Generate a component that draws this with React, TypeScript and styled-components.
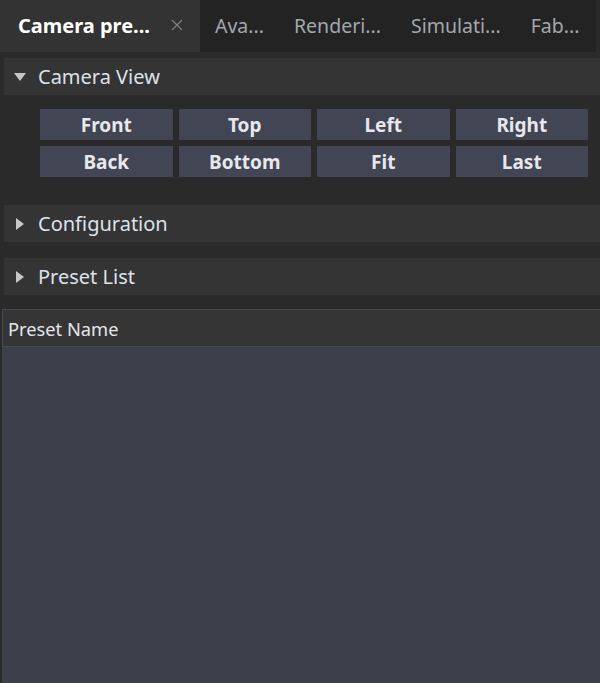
import React from "react";
import styled, { createGlobalStyle } from "styled-components";

const Global = createGlobalStyle`
  html, body { margin: 0; padding: 0; background: #2a2a2a; }
  body { font-family: "Noto Sans", "Open Sans", sans-serif; }
  * { box-sizing: border-box; }
`;

const Page = styled.div`
  width: 600px;
  height: 683px;
  background: #2a2a2a;
  display: flex;
  flex-direction: column;
  overflow: hidden;
`;

const TabBar = styled.div`
  height: 52px;
  margin-right: 4px;
  background: #232323;
  display: flex;
  align-items: stretch;
  flex-shrink: 0;
`;

const Tab = styled.div<{ $active?: boolean }>`
  display: flex;
  align-items: center;
  padding: ${(p) => (p.$active ? "0 17px 2px 18px" : "0 15px 2px")};
  width: ${(p) => (p.$active ? "200px" : "auto")};
  background: ${(p) => (p.$active ? "#333333" : "transparent")};
  color: ${(p) => (p.$active ? "#ffffff" : "#a3a7ae")};
  font-size: ${(p) => (p.$active ? "20px" : "19.5px")};
  font-weight: ${(p) => (p.$active ? 700 : 400)};
  white-space: nowrap;
  justify-content: space-between;
`;

const Close = styled.svg`
  width: 12px;
  height: 12px;
`;

const Body = styled.div`
  flex: 1;
  display: flex;
  flex-direction: column;
  padding-top: 6px;
`;

const Header = styled.div<{ $mb: number }>`
  height: 37px;
  margin: 0 0 ${(p) => p.$mb}px 4px;
  background: #343434;
  display: flex;
  align-items: center;
  color: #dde2ea;
  font-size: 20px;
  flex-shrink: 0;
`;

const Arrow = styled.svg`
  width: 12px;
  height: 12px;
  margin: 0 12px 0 10px;
  fill: #c4c6ca;
`;

const ButtonGrid = styled.div`
  display: grid;
  grid-template-columns: repeat(4, 1fr);
  gap: 6px;
  padding: 0 12px 0 40px;
  margin-bottom: 28px;
`;

const Btn = styled.div`
  height: 31px;
  background: #424554;
  color: #e6e8ec;
  font-size: 19px;
  font-weight: 700;
  display: flex;
  align-items: center;
  justify-content: center;
`;

const Table = styled.div`
  flex: 1;
  margin-left: 2px;
  display: flex;
  flex-direction: column;
`;

const ColHeader = styled.div`
  height: 38px;
  background: #353535;
  border-top: 1px solid #474a55;
  border-left: 1px solid #474a55;
  border-bottom: 1px solid #474a55;
  display: flex;
  align-items: center;
  padding-left: 5px;
  color: #e4e6ea;
  font-size: 18.3px;
`;

const ListArea = styled.div`
  flex: 1;
  background: #3d404b;
`;

const Down = () => (
  <Arrow viewBox="0 0 12 12">
    <polygon points="0,2 12,2 6,10" />
  </Arrow>
);

const Right = () => (
  <Arrow viewBox="0 0 12 12">
    <polygon points="2,0 10,6 2,12" />
  </Arrow>
);

const buttons = ["Front", "Top", "Left", "Right", "Back", "Bottom", "Fit", "Last"];

export default function App() {
  return (
    <Page>
      <Global />
      <TabBar>
        <Tab $active>
          Camera pre...
          <Close viewBox="0 0 12 12">
            <path d="M1 1 L11 11 M11 1 L1 11" stroke="#808080" strokeWidth="1.2" />
          </Close>
        </Tab>
        <Tab>Ava...</Tab>
        <Tab>Renderi...</Tab>
        <Tab>Simulati...</Tab>
        <Tab>Fab...</Tab>
      </TabBar>
      <Body>
        <Header $mb={14}>
          <Down />
          Camera View
        </Header>
        <ButtonGrid>
          {buttons.map((b) => (
            <Btn key={b}>{b}</Btn>
          ))}
        </ButtonGrid>
        <Header $mb={16}>
          <Right />
          Configuration
        </Header>
        <Header $mb={14}>
          <Right />
          Preset List
        </Header>
        <Table>
          <ColHeader>Preset Name</ColHeader>
          <ListArea />
        </Table>
      </Body>
    </Page>
  );
}
